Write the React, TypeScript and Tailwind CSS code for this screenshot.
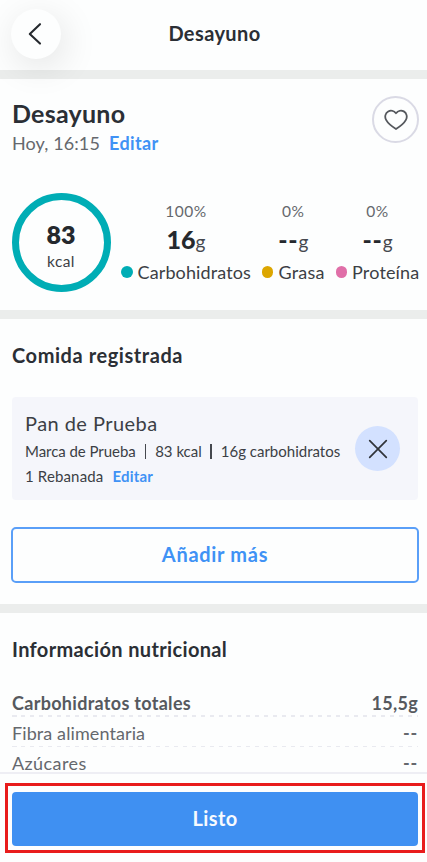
type Macro = { percent: string; amount: string; label: string; dot: string; tracking: string };

const macros: Macro[] = [
  { percent: "100%", amount: "16", label: "Carbohidratos", dot: "bg-[#00adb5]", tracking: "tracking-[0.12px]" },
  { percent: "0%", amount: "--", label: "Grasa", dot: "bg-[#dca600]", tracking: "tracking-[0.2px]" },
  { percent: "0%", amount: "--", label: "Proteína", dot: "bg-[#e06fa8]", tracking: "tracking-[0.15px]" },
];

const nutrients = [
  { label: "Carbohidratos totales", value: "15,5g", style: "font-bold leading-[27px] tracking-[0.3px] text-[#56595e]" },
  { label: "Fibra alimentaria", value: "--", style: "leading-[25px] tracking-[0.1px] text-[#65686d]" },
  { label: "Azúcares", value: "--", style: "leading-[25px] tracking-[0.4px] text-[#65686d]" },
];

function Divider() {
  return <div className="h-[9px] shrink-0 bg-[#ebedec]" />;
}

function Header() {
  return (
    <header className="relative z-10 grid h-[70px] shrink-0 grid-cols-[1fr_auto_1fr] items-center px-[11px]">
      <button className="mb-[2px] flex size-[50px] items-center justify-center rounded-full bg-[#fdfefe] shadow-[4px_8px_36px_rgba(0,0,0,0.11)]">
        <svg width="50" height="50" viewBox="0 0 50 50" fill="none" stroke="#25292e" strokeWidth="2.1" strokeLinecap="round" strokeLinejoin="round">
          <path d="M29 15.2 18.8 25 29 34.6" />
        </svg>
      </button>
      <h1 className="mb-[4px] ml-[2px] text-[20px] font-bold leading-6 tracking-[0.4px]">Desayuno</h1>
    </header>
  );
}

function Summary() {
  return (
    <section className="h-[231px] shrink-0 pr-2 pl-[11px]">
      <div className="flex justify-between pl-px">
        <div className="pt-[19px]">
          <h2 className="text-[25px] font-bold leading-[31px] tracking-[0.25px]">Desayuno</h2>
          <p className="flex gap-[9px] text-[18px] leading-[28px] text-[#65686d]">
            <span className="tracking-[0.1px]">Hoy, 16:15</span>
            <a className="font-bold tracking-[0.4px] text-[#3f92f5]">Editar</a>
          </p>
        </div>
        <button className="mt-[17px] flex size-[47px] items-center justify-center rounded-full border-2 border-[#dadae5]">
          <svg width="24" height="22" viewBox="0 0 24 22" fill="none" stroke="#55585d" strokeWidth="1.8" strokeLinejoin="round">
            <path d="M12 4.2C10 1.7 6.7 .9 4.2 2.4 1.3 4.1.4 7.8 2.1 10.9 3.9 14.3 8.3 17.7 12 20c3.7-2.3 8.1-5.7 9.9-9.1 1.7-3.1.8-6.8-2.1-8.5C17.3.9 14 1.7 12 4.2Z" />
          </svg>
        </button>
      </div>

      <div className="mt-[36px] flex gap-[10.5px] pl-[0.5px]">
        <div className="flex size-[99px] shrink-0 flex-col items-center rounded-full border-[7px] border-[#00adb5] pt-[19px]">
          <span className="text-[25px] font-extrabold leading-[30px] text-[#25292e]">83</span>
          <span className="text-[15.5px] leading-[24px] tracking-[0.4px] text-[#3c3f45]">kcal</span>
        </div>
        <div className="flex gap-[11px] pt-[6px]">
          {macros.map((macro) => (
            <div key={macro.label} className="flex flex-col items-center whitespace-nowrap">
              <span className="text-[15.5px] leading-6 tracking-[0.5px] text-[#65686d]">{macro.percent}</span>
              <span className="flex items-baseline leading-[32px]">
                <b className={`text-[25px] font-black text-[#25292e] ${macro.amount === "--" ? "tracking-[0.8px]" : ""}`}>{macro.amount}</b>
                <span className="text-[19px] text-[#45484e]">g</span>
              </span>
              <span className="flex items-center gap-[5px] text-[18px] leading-[28px] text-[#3c3f45]">
                <i className={`size-[11.5px] rounded-full ${macro.dot}`} />
                <span className={macro.tracking}>{macro.label}</span>
              </span>
            </div>
          ))}
        </div>
      </div>
    </section>
  );
}

function LoggedFood() {
  return (
    <section className="h-[285px] shrink-0 pt-[24px] pr-2 pl-[11px]">
      <h3 className="pl-px text-[20px] font-bold leading-6 tracking-[0.57px]">Comida registrada</h3>

      <div className="mx-px mt-[30px] flex h-[103px] items-center justify-between rounded-[4px] bg-[#f5f6fb] pr-[18px] pl-[13px] text-[#3c3f45]">
        <div className="whitespace-nowrap">
          <p className="text-[20px] leading-[29px] tracking-[0.45px]">Pan de Prueba</p>
          <p className="flex items-center text-[15px] leading-[26px]">
            <span className="tracking-[-0.05px]">Marca de Prueba</span>
            <i className="mx-[9px] h-[15px] w-[1.5px] bg-[#45484e]" />
            <span>83 kcal</span>
            <i className="mr-[9px] ml-[8.5px] h-[15px] w-[1.5px] bg-[#45484e]" />
            <span>16g carbohidratos</span>
          </p>
          <p className="flex gap-[9px] text-[15px] leading-6">
            <span className="tracking-[0.15px]">1 Rebanada</span>
            <a className="font-bold tracking-[0.2px] text-[#3f92f5]">Editar</a>
          </p>
        </div>
        <button className="flex size-[45px] items-center justify-center rounded-full bg-[#d3e1ff]">
          <svg width="20" height="20" viewBox="0 0 20 20" stroke="#30343a" strokeWidth="1.7" strokeLinecap="round">
            <path d="M1.7 1.7 18.3 18.3M18.3 1.7 1.7 18.3" />
          </svg>
        </button>
      </div>

      <button className="mt-[27px] h-[56px] w-full rounded-[5px] border-2 border-[#5a9ff8] pb-[2px] text-[20px] font-bold tracking-[0.7px] text-[#3f92f5]">
        Añadir más
      </button>
    </section>
  );
}

function Nutrition() {
  return (
    <section className="h-[159px] shrink-0 overflow-hidden pt-[24px] pr-[9px] pl-3">
      <h3 className="text-[20px] font-bold leading-6 tracking-[0.35px]">Información nutricional</h3>
      <div className="mt-[29px]">
        {nutrients.map((row) => (
          <div key={row.label} className="mb-[4px]">
            <div className={`flex h-[25px] justify-between text-[18px] ${row.style}`}>
              <span>{row.label}</span>
              <span className={row.value === "--" ? "font-bold tracking-[0.8px]" : ""}>{row.value}</span>
            </div>
            <div className="h-[1.5px] bg-[repeating-linear-gradient(90deg,#e9eaf0_0_4.5px,transparent_4.5px_9px)]" />
          </div>
        ))}
      </div>
    </section>
  );
}

export default function App() {
  return (
    <div className="flex h-[862px] w-[427px] flex-col overflow-hidden bg-[#fdfefe] font-['Lato',sans-serif] text-[#2b2f35]">
      <Header />
      <Divider />
      <Summary />
      <Divider />
      <LoggedFood />
      <Divider />
      <Nutrition />
      <footer className="flex-1 border-t-2 border-[#eeeef4] pt-[9px] pr-[2px] pl-[5px]">
        <div className="h-[70px] border-[3.5px] border-[#e81c1c] pt-[6px] pr-1 pl-[4px]">
          <button className="h-[54px] w-full rounded-[4px] bg-[#3f90f2] pb-[2px] text-[20px] font-bold tracking-[0.4px] text-[#f7fafe]">Listo</button>
        </div>
      </footer>
    </div>
  );
}
